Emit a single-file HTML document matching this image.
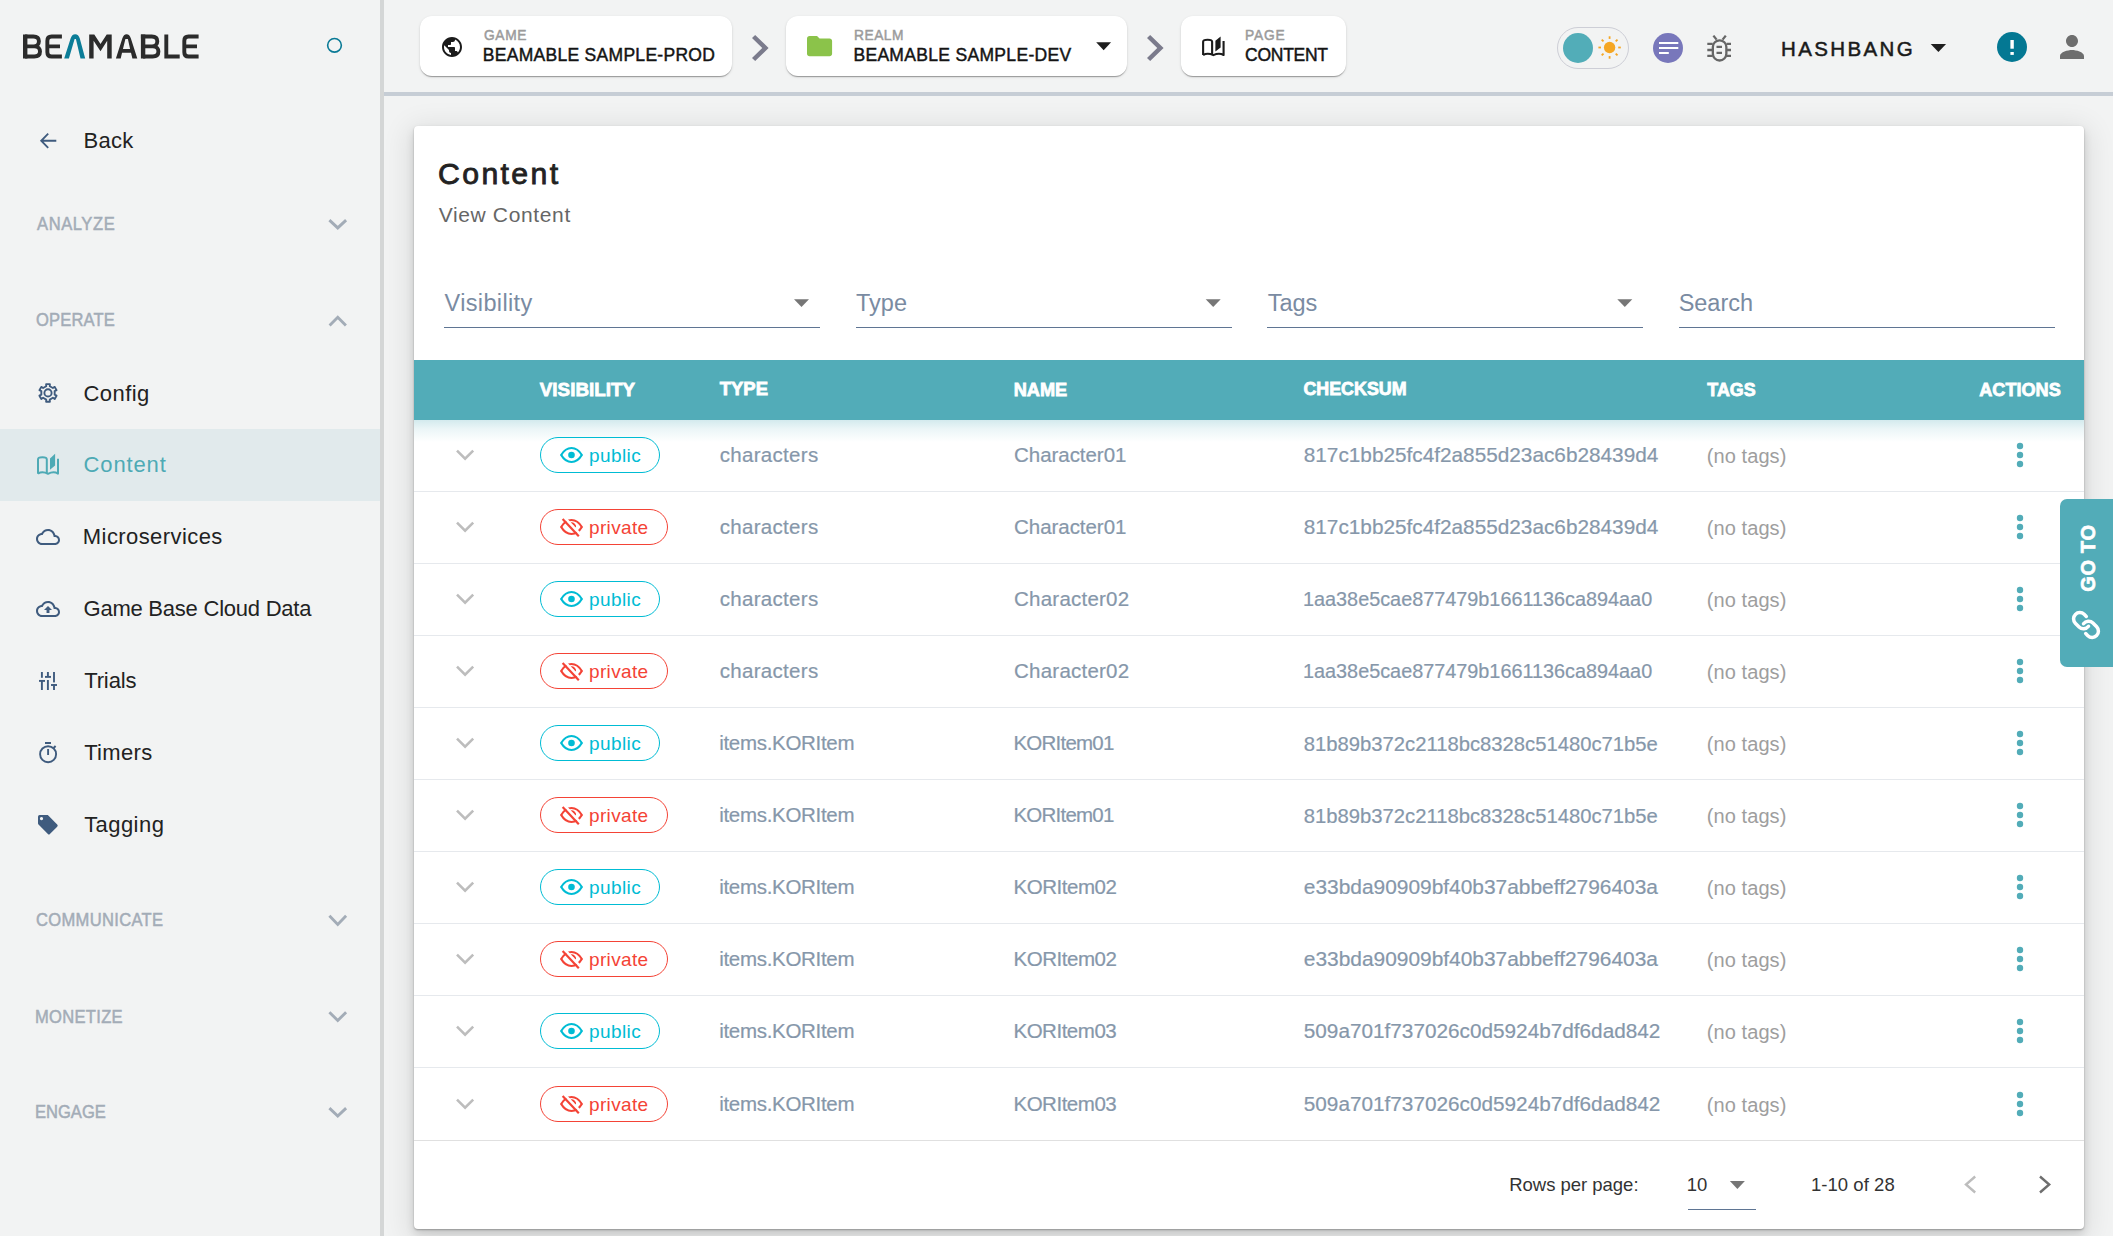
<!DOCTYPE html><html><head><meta charset="utf-8"><style>
html,body{margin:0;padding:0;}
body{width:2113px;height:1236px;overflow:hidden;position:relative;background:#f2f3f3;font-family:"Liberation Sans",sans-serif;}
.t{position:absolute;white-space:nowrap;line-height:1;}
.a{position:absolute;}
svg{position:absolute;overflow:visible;}
</style></head><body>
<div class="a" style="left:0;top:0;width:380px;height:1236px;background:#f2f3f3"></div>
<div class="a" style="left:380px;top:0;width:4px;height:1236px;background:#d4d6d6"></div>
<div class="a" style="left:0;top:429px;width:380px;height:72px;background:#e1eaec"></div>
<svg style="left:0;top:0" width="220" height="80" viewBox="0 0 220 80">
<g fill="none" stroke="#2b2b2b" stroke-width="3.9">
<path d="M25,36.45 H33.4 C37.4,36.45 38.9,38.6 38.9,41.2 C38.9,44.1 37.0,46.35 33.6,46.35 H25 M25,46.4 H34.4 C38.5,46.4 40.0,49.2 40.0,51.6 C40.0,54.6 38.2,56.55 34.2,56.55 H25"/>
<path d="M61.9,36.45 H51.6 C48.4,36.45 47.35,38.4 47.35,40.8 V52.2 C47.35,54.6 48.4,56.55 51.6,56.55 H61.9 M47.4,46.4 H60"/>
<path d="M140.9,36.45 H151.8 C155.8,36.45 157.3,38.6 157.3,41.2 C157.3,44.1 155.4,46.35 152,46.35 H143 M143,46.4 H152.8 C156.9,46.4 158.4,49.2 158.4,51.6 C158.4,54.6 156.6,56.55 152.6,56.55 H143"/>
<path d="M166.3,34.5 V56.55 H179.7"/>
<path d="M198.6,36.45 H188.5 C185.3,36.45 184.3,38.4 184.3,40.8 V52.2 C184.3,54.6 185.3,56.55 188.5,56.55 H198.6 M184.3,46.4 H197"/>
</g>
<g fill="#2b2b2b">
<rect x="23" y="34.5" width="4.4" height="24"/>
<rect x="140.9" y="34.5" width="4.4" height="24"/>
<path d="M89.2,58.5 V34.5 H94.3 L100.5,44 L106.7,34.5 H111.7 V58.5 H107.2 V40.8 L100.5,51.2 L93.6,40.8 V58.5 Z"/>
<path fill-rule="evenodd" d="M115.9,58.5 L122.3,38.6 Q123.6,34.3 126.6,34.3 Q129.6,34.3 130.9,38.6 L137.3,58.5 H132.4 L131.0,52.7 H122.05 L120.7,58.5 Z M122.95,49.1 H130.1 L127.9,38.9 H125.4 Z"/>
</g>
<path fill="#0b7d98" d="M64.2,58.5 L70.6,38.6 Q71.9,34.3 75.2,34.3 Q78.5,34.3 79.8,38.6 L85.2,58.5 H80.5 L75.9,38.9 H74.6 L68.9,58.5 Z"/>
<circle cx="334.5" cy="45.3" r="6.85" fill="none" stroke="#0a7a96" stroke-width="1.6"/>
</svg>
<svg style="left:0;top:0" width="80" height="200"><path d="M56.3,140.75 H41.5 M48.2,133.6 L41.2,140.75 L48.2,147.9" fill="none" stroke="#3f5b7e" stroke-width="1.8"/></svg>
<div class="t" style="left:83.44px;top:130.20px;font-size:22.00px;font-weight:400;color:#222;letter-spacing:0.27px;">Back</div>
<div class="t" style="left:36.50px;top:214.93px;font-size:18.20px;font-weight:400;color:#a3acb7;letter-spacing:0.65px;transform:scaleX(0.91);transform-origin:0 0;-webkit-text-stroke:0.5px #a3acb7">ANALYZE</div>
<svg style="left:0;top:0" width="1" height="1"><path d="M329.4,220.1 L337.75,227.9 L346.1,220.1" fill="none" stroke="#a3acb7" stroke-width="2.9"/></svg>
<div class="t" style="left:35.67px;top:311.23px;font-size:18.20px;font-weight:400;color:#a3acb7;letter-spacing:0.17px;transform:scaleX(0.91);transform-origin:0 0;-webkit-text-stroke:0.5px #a3acb7">OPERATE</div>
<svg style="left:0;top:0" width="1" height="1"><path d="M329.6,325.5 L337.75,317.3 L345.9,325.5" fill="none" stroke="#a3acb7" stroke-width="2.9"/></svg>
<div class="t" style="left:35.67px;top:911.43px;font-size:18.20px;font-weight:400;color:#a3acb7;letter-spacing:0.35px;transform:scaleX(0.91);transform-origin:0 0;-webkit-text-stroke:0.5px #a3acb7">COMMUNICATE</div>
<svg style="left:0;top:0" width="1" height="1"><path d="M329.4,915.8000000000001 L337.75,924.4 L346.1,915.8000000000001" fill="none" stroke="#a3acb7" stroke-width="2.9"/></svg>
<div class="t" style="left:35.18px;top:1007.53px;font-size:18.20px;font-weight:400;color:#a3acb7;letter-spacing:0.33px;transform:scaleX(0.91);transform-origin:0 0;-webkit-text-stroke:0.5px #a3acb7">MONETIZE</div>
<svg style="left:0;top:0" width="1" height="1"><path d="M329.4,1012.2 L337.75,1020.5 L346.1,1012.2" fill="none" stroke="#a3acb7" stroke-width="2.9"/></svg>
<div class="t" style="left:35.18px;top:1103.13px;font-size:18.20px;font-weight:400;color:#a3acb7;transform:scaleX(0.91);transform-origin:0 0;-webkit-text-stroke:0.5px #a3acb7">ENGAGE</div>
<svg style="left:0;top:0" width="1" height="1"><path d="M329.4,1108.1 L337.75,1116.1 L346.1,1108.1" fill="none" stroke="#a3acb7" stroke-width="2.9"/></svg>
<div class="t" style="left:83.50px;top:382.80px;font-size:22.00px;font-weight:400;color:#222;letter-spacing:0.43px;">Config</div>
<div class="t" style="left:83.50px;top:453.90px;font-size:22.00px;font-weight:400;color:#4eaab5;letter-spacing:0.88px;">Content</div>
<div class="t" style="left:82.84px;top:526.20px;font-size:22.00px;font-weight:400;color:#222;letter-spacing:0.42px;">Microservices</div>
<div class="t" style="left:83.50px;top:597.90px;font-size:22.00px;font-weight:400;color:#222;letter-spacing:-0.23px;">Game Base Cloud Data</div>
<div class="t" style="left:84.16px;top:670.10px;font-size:22.00px;font-weight:400;color:#222;letter-spacing:-0.12px;">Trials</div>
<div class="t" style="left:84.16px;top:742.10px;font-size:22.00px;font-weight:400;color:#222;letter-spacing:0.34px;">Timers</div>
<div class="t" style="left:84.16px;top:814.20px;font-size:22.00px;font-weight:400;color:#222;letter-spacing:0.44px;">Tagging</div>
<svg style="left:0;top:0" width="1" height="1"><path d="M46.21,386.24 L46.13,384.10 L49.87,384.10 L49.79,386.24 L52.88,388.02 L54.69,386.88 L56.56,390.12 L54.66,391.11 L54.66,394.69 L56.56,395.68 L54.69,398.92 L52.88,397.78 L49.79,399.56 L49.87,401.70 L46.13,401.70 L46.21,399.56 L43.12,397.78 L41.31,398.92 L39.44,395.68 L41.34,394.69 L41.34,391.11 L39.44,390.12 L41.31,386.88 L43.12,388.02Z" fill="none" stroke="#3f5b7e" stroke-width="1.9" stroke-linejoin="round"/><circle cx="48.0" cy="392.9" r="3.6" fill="none" stroke="#3f5b7e" stroke-width="1.9"/></svg>
<svg style="left:0;top:0" width="1" height="1"><g fill="none" stroke="#4eaab5" stroke-width="2.0" stroke-linejoin="round"><path d="M38.00,473.70 L38.00,459.40 C38.00,457.90 40.50,457.30 42.40,457.30 C44.30,457.30 46.80,457.90 46.80,459.40 L46.80,473.20"/><path d="M38.00,473.60 C40.70,472.00 44.50,472.00 48.00,473.80 C51.50,472.00 55.30,472.00 58.00,473.60 L58.00,458.70"/></g><path d="M50.00,458.40 L55.10,453.80 L55.10,465.60 L50.00,469.80 Z" fill="#4eaab5"/></svg>
<svg style="left:36px;top:524.8px" width="24" height="24" viewBox="0 0 24 24"><path d="M19.35 10.04C18.67 6.59 15.64 4 12 4 9.11 4 6.6 5.64 5.35 8.04 2.34 8.36 0 10.91 0 14c0 3.31 2.69 6 6 6h13c2.76 0 5-2.24 5-5 0-2.64-2.05-4.78-4.65-4.96zM19 18H6c-2.21 0-4-1.79-4-4 0-2.05 1.53-3.76 3.56-3.97l1.07-.11.5-.95C8.08 7.14 9.94 6 12 6c2.62 0 4.88 1.86 5.39 4.43l.3 1.5 1.53.11c1.56.1 2.78 1.41 2.78 2.96 0 1.65-1.35 3-3 3z" fill="#3f5b7e"/></svg>
<svg style="left:36px;top:596.8px" width="24" height="24" viewBox="0 0 24 24"><path d="M19.35 10.04C18.67 6.59 15.64 4 12 4 9.11 4 6.6 5.64 5.35 8.04 2.34 8.36 0 10.91 0 14c0 3.31 2.69 6 6 6h13c2.76 0 5-2.24 5-5 0-2.64-2.05-4.78-4.65-4.96zM19 18H6c-2.21 0-4-1.79-4-4 0-2.05 1.53-3.76 3.56-3.97l1.07-.11.5-.95C8.08 7.14 9.94 6 12 6c2.62 0 4.88 1.86 5.39 4.43l.3 1.5 1.53.11c1.56.1 2.78 1.41 2.78 2.96 0 1.65-1.35 3-3 3z" fill="#3f5b7e"/><path d="M8 13h2.55v3h2.9v-3H16l-4-4z" fill="#3f5b7e"/></svg>
<svg style="left:0;top:0" width="1" height="1"><g fill="#3f5b7e"><rect x="40.949999999999996" y="672" width="1.9" height="5.7999999999999545"/><rect x="40.949999999999996" y="680.2" width="1.9" height="9.799999999999955"/><rect x="39" y="679.9499999999999" width="6" height="1.9"/><rect x="46.949999999999996" y="672" width="1.9" height="5"/><rect x="46.949999999999996" y="680" width="1.9" height="10"/><rect x="45" y="675.9499999999999" width="6" height="1.9"/><rect x="53.05" y="672" width="1.9" height="10.399999999999977"/><rect x="53.05" y="684.2" width="1.9" height="5.7999999999999545"/><rect x="51" y="684.05" width="6" height="1.9"/></g></svg>
<svg style="left:0;top:0" width="1" height="1"><g fill="none" stroke="#3f5b7e" stroke-width="1.9"><circle cx="48.1" cy="754.2" r="8.0"/><path d="M45,743 H51 M48.1,749 V755 M53.6,748 L55.6,746"/></g></svg>
<svg style="left:0;top:0" width="1" height="1"><path d="M39.6,815.1 H47.8 L57.2,824.5 Q58.3,825.6 57.2,826.7 L49.9,834 Q48.9,835 47.9,834 L38.5,824.6 Q38,824.1 38,823.2 V816.7 Q38,815.1 39.6,815.1 Z M41.5,817 a1.6,1.6 0 1 0 0.01,0 Z" fill="#3f5b7e" fill-rule="evenodd"/></svg>
<div class="a" style="left:384px;top:92px;width:1729px;height:4px;background:#c6cdd5"></div>
<div class="a" style="left:420px;top:16px;width:312px;height:60px;background:#fff;border-radius:12px;box-shadow:0 2px 1px -1px rgba(0,0,0,.2),0 1px 1px 0 rgba(0,0,0,.14),0 1px 3px 0 rgba(0,0,0,.12);"></div>
<div class="a" style="left:786px;top:16px;width:341px;height:60px;background:#fff;border-radius:12px;box-shadow:0 2px 1px -1px rgba(0,0,0,.2),0 1px 1px 0 rgba(0,0,0,.14),0 1px 3px 0 rgba(0,0,0,.12);"></div>
<div class="a" style="left:1181px;top:16px;width:165px;height:60px;background:#fff;border-radius:12px;box-shadow:0 2px 1px -1px rgba(0,0,0,.2),0 1px 1px 0 rgba(0,0,0,.14),0 1px 3px 0 rgba(0,0,0,.12);"></div>
<svg style="left:440px;top:35px" width="24" height="24" viewBox="0 0 24 24"><path d="M12 2C6.48 2 2 6.48 2 12s4.48 10 10 10 10-4.48 10-10S17.52 2 12 2zm-1 17.93c-3.95-.49-7-3.85-7-7.93 0-.62.08-1.21.21-1.79L9 15v1c0 1.1.9 2 2 2v1.93zm6.9-2.54c-.26-.81-1-1.39-1.9-1.39h-1v-3c0-.55-.45-1-1-1H8v-2h2c.55 0 1-.45 1-1V7h2c1.1 0 2-.9 2-2v-.41c2.93 1.19 5 4.06 5 7.41 0 2.08-.8 3.97-2.1 5.39z" fill="#1b1b1b"/></svg>
<div class="t" style="left:483.51px;top:26.50px;font-size:15.30px;font-weight:400;color:#9b9b9b;letter-spacing:0.72px;transform:scaleX(0.9);transform-origin:0 0;-webkit-text-stroke:0.5px #9b9b9b">GAME</div>
<div class="t" style="left:482.80px;top:46.62px;font-size:17.50px;font-weight:400;color:#141414;letter-spacing:0.29px;-webkit-text-stroke:0.45px #141414">BEAMABLE SAMPLE-PROD</div>
<svg style="left:751.6px;top:34.8px" width="16.6" height="26" viewBox="8.59 6 7.41 12" preserveAspectRatio="none"><path d="M10 6L8.59 7.41 13.17 12l-4.58 4.59L10 18l6-6z" fill="#7b7b8c"/></svg>
<svg style="left:1146.9px;top:34.8px" width="16.6" height="26" viewBox="8.59 6 7.41 12" preserveAspectRatio="none"><path d="M10 6L8.59 7.41 13.17 12l-4.58 4.59L10 18l6-6z" fill="#7b7b8c"/></svg>
<svg style="left:806.5px;top:35.8px" width="25.1" height="20.3" viewBox="2 4 20 16" preserveAspectRatio="none"><path d="M10 4H4c-1.1 0-1.99.9-1.99 2L2 18c0 1.1.9 2 2 2h16c1.1 0 2-.9 2-2V8c0-1.1-.9-2-2-2h-8l-2-2z" fill="#8bc34a"/></svg>
<div class="t" style="left:853.70px;top:26.50px;font-size:15.30px;font-weight:400;color:#9b9b9b;letter-spacing:0.57px;transform:scaleX(0.9);transform-origin:0 0;-webkit-text-stroke:0.5px #9b9b9b">REALM</div>
<div class="t" style="left:853.40px;top:46.62px;font-size:17.50px;font-weight:400;color:#141414;letter-spacing:0.32px;-webkit-text-stroke:0.45px #141414">BEAMABLE SAMPLE-DEV</div>
<svg style="left:0;top:0" width="1" height="1"><path d="M1096.2,42.2 H1111.1 L1103.65,50.2 Z" fill="#1e1e1e"/></svg>
<svg style="left:0;top:0" width="1" height="1"><g fill="none" stroke="#1b1b1b" stroke-width="2.1" stroke-linejoin="round"><path d="M1203.12,55.05 L1203.12,41.72 C1203.12,40.32 1205.68,39.76 1207.62,39.76 C1209.57,39.76 1212.12,40.32 1212.12,41.72 L1212.12,54.59"/><path d="M1203.12,54.96 C1205.89,53.47 1209.77,53.47 1213.35,55.15 C1216.93,53.47 1220.81,53.47 1223.58,54.96 L1223.58,41.07"/></g><path d="M1215.40,40.79 L1220.61,36.50 L1220.61,47.50 L1215.40,51.42 Z" fill="#1b1b1b"/></svg>
<div class="t" style="left:1244.90px;top:26.50px;font-size:15.30px;font-weight:400;color:#9b9b9b;letter-spacing:0.92px;transform:scaleX(0.9);transform-origin:0 0;-webkit-text-stroke:0.5px #9b9b9b">PAGE</div>
<div class="t" style="left:1245.12px;top:46.62px;font-size:17.50px;font-weight:400;color:#141414;letter-spacing:-0.28px;-webkit-text-stroke:0.45px #141414">CONTENT</div>
<div class="a" style="left:1557px;top:27px;width:70px;height:40px;border:1px solid #cdced6;border-radius:21px;"></div>
<div class="a" style="left:1563px;top:33px;width:30px;height:30px;border-radius:50%;background:#52adb8"></div>
<svg style="left:0;top:0" width="1" height="1"><circle cx="1609.6" cy="47.5" r="5.7" fill="#f5a623"/><g stroke="#f5a623" stroke-width="1.8"><line x1="1618.20" y1="47.50" x2="1620.80" y2="47.50"/><line x1="1615.68" y1="53.58" x2="1617.52" y2="55.42"/><line x1="1609.60" y1="56.10" x2="1609.60" y2="58.70"/><line x1="1603.52" y1="53.58" x2="1601.68" y2="55.42"/><line x1="1601.00" y1="47.50" x2="1598.40" y2="47.50"/><line x1="1603.52" y1="41.42" x2="1601.68" y2="39.58"/><line x1="1609.60" y1="38.90" x2="1609.60" y2="36.30"/><line x1="1615.68" y1="41.42" x2="1617.52" y2="39.58"/></g></svg>
<div class="a" style="left:1653px;top:33px;width:30px;height:30px;border-radius:50%;background:#7877bb"></div>
<svg style="left:0;top:0" width="1" height="1"><g fill="#fff"><rect x="1659" y="42" width="19.3" height="2"/><rect x="1659" y="47" width="19.3" height="2"/><rect x="1659" y="52" width="9.8" height="2"/></g></svg>
<svg style="left:0;top:0" width="1" height="1"><g fill="none" stroke="#666" stroke-width="2.3"><rect x="1712.85" y="40.3" width="13.5" height="20.2" rx="6.75"/><path d="M1707.3,43.9 H1712.7 M1707.3,50 H1712.7 M1707.3,55.8 H1712.7 M1726.5,43.9 H1731 M1726.5,50 H1731 M1726.5,55.8 H1731 M1716.5,46.9 H1722 M1716.5,52.9 H1722 M1713.4,35.6 L1716.6,39.6 M1725.8,35.6 L1722.6,39.6"/></g></svg>
<div class="t" style="left:1781.06px;top:39.08px;font-size:20.50px;font-weight:400;color:#1a1a1a;letter-spacing:2.37px;-webkit-text-stroke:0.5px #1a1a1a">HASHBANG</div>
<svg style="left:0;top:0" width="1" height="1"><path d="M1930.7,44 H1946.1 L1938.4,52.1 Z" fill="#1e1e1e"/></svg>
<div class="a" style="left:1997.1px;top:32.4px;width:30px;height:30px;border-radius:50%;background:#047893"></div>
<svg style="left:0;top:0" width="1" height="1"><g fill="#fff"><rect x="2010.4" y="40" width="3.4" height="8.7"/><rect x="2010.4" y="52" width="3.4" height="2.9"/></g></svg>
<svg style="left:2053.8px;top:29.4px" width="36" height="36" viewBox="0 0 24 24"><path d="M12 12c2.21 0 4-1.79 4-4s-1.79-4-4-4-4 1.79-4 4 1.79 4 4 4zm0 2c-2.67 0-8 1.34-8 4v2h16v-2c0-2.66-5.33-4-8-4z" fill="#6e6e6e"/></svg>
<div class="a" style="left:414px;top:126px;width:1670px;height:1103px;background:#fff;border-radius:4px;box-shadow:0 1px 2px rgba(0,0,0,.28),0 5px 10px rgba(0,0,0,.12),0 6px 28px 6px rgba(0,0,0,.09);"></div>
<div class="t" style="left:438.09px;top:158.63px;font-size:30.20px;font-weight:400;color:#222;letter-spacing:2.37px;-webkit-text-stroke:0.85px #222">Content</div>
<div class="t" style="left:438.69px;top:204.15px;font-size:21.00px;font-weight:400;color:#666;letter-spacing:0.64px;">View Content</div>
<div class="a" style="left:444.0px;top:327px;width:376px;height:1.4px;background:#5f7593"></div>
<div class="t" style="left:444.56px;top:291.52px;font-size:23.50px;font-weight:400;color:#7a8ba2;letter-spacing:0.36px;">Visibility</div>
<svg style="left:0;top:0" width="1" height="1"><path d="M794.0,299.2 H809.0 L801.5,307 Z" fill="#767676"/></svg>
<div class="a" style="left:855.7px;top:327px;width:376px;height:1.4px;background:#5f7593"></div>
<div class="t" style="left:856.00px;top:291.52px;font-size:23.50px;font-weight:400;color:#7a8ba2;">Type</div>
<svg style="left:0;top:0" width="1" height="1"><path d="M1205.7,299.2 H1220.7 L1213.2,307 Z" fill="#767676"/></svg>
<div class="a" style="left:1267.3px;top:327px;width:376px;height:1.4px;background:#5f7593"></div>
<div class="t" style="left:1267.67px;top:291.52px;font-size:23.50px;font-weight:400;color:#7a8ba2;">Tags</div>
<svg style="left:0;top:0" width="1" height="1"><path d="M1617.3,299.2 H1632.3 L1624.8,307 Z" fill="#767676"/></svg>
<div class="a" style="left:1679.0px;top:327px;width:376px;height:1.4px;background:#5f7593"></div>
<div class="t" style="left:1678.63px;top:291.52px;font-size:23.50px;font-weight:400;color:#7a8ba2;">Search</div>
<div class="a" style="left:414px;top:360px;width:1670px;height:60px;background:#52acb8"></div>
<div class="a" style="left:414px;top:420px;width:1670px;height:22px;background:linear-gradient(rgba(72,168,182,.24),rgba(72,168,182,.11) 40%,rgba(72,168,182,0))"></div>
<div class="t" style="left:539.81px;top:381.10px;font-size:18.83px;font-weight:700;color:#fff;-webkit-text-stroke:0.8px #fff">VISIBILITY</div>
<div class="t" style="left:719.72px;top:380.19px;font-size:18.48px;font-weight:700;color:#fff;-webkit-text-stroke:0.8px #fff">TYPE</div>
<div class="t" style="left:1013.63px;top:380.63px;font-size:18.20px;font-weight:700;color:#fff;-webkit-text-stroke:0.8px #fff">NAME</div>
<div class="t" style="left:1303.38px;top:380.90px;font-size:17.88px;font-weight:700;color:#fff;-webkit-text-stroke:0.8px #fff">CHECKSUM</div>
<div class="t" style="left:1707.32px;top:381.62px;font-size:17.86px;font-weight:700;color:#fff;-webkit-text-stroke:0.8px #fff">TAGS</div>
<div class="t" style="left:1979.26px;top:381.39px;font-size:18.13px;font-weight:700;color:#fff;-webkit-text-stroke:0.8px #fff">ACTIONS</div>
<div class="a" style="left:414px;top:491px;width:1670px;height:1px;background:#e6e9ed"></div>
<svg style="left:0;top:0" width="1" height="1"><path d="M457,450.6 L465.1,458.6 L473.2,450.6" fill="none" stroke="#bdbdbd" stroke-width="2.6"/></svg>
<div class="a" style="left:540px;top:437px;width:118px;height:34px;border:1px solid #00bcd4;border-radius:18px;"></div>
<svg style="left:0;top:0" width="1" height="1"><path d="M561.2,455 C564.5,449.4 568,448.0 571.5,448.0 C575,448.0 578.5,449.4 581.8,455 C578.5,460.6 575,462.0 571.5,462.0 C568,462.0 564.5,460.6 561.2,455 Z" fill="none" stroke="#00bcd4" stroke-width="2.2"/><circle cx="571.5" cy="455" r="3.3" fill="#00bcd4"/></svg>
<div class="t" style="left:589.06px;top:445.65px;font-size:19.00px;font-weight:400;color:#00bcd4;letter-spacing:0.39px;">public</div>
<div class="t" style="left:719.78px;top:445.48px;font-size:20.50px;font-weight:400;color:#8697aa;letter-spacing:0.30px;-webkit-text-stroke:0.2px #8697aa">characters</div>
<div class="t" style="left:1014.08px;top:445.48px;font-size:20.50px;font-weight:400;color:#8697aa;letter-spacing:-0.05px;-webkit-text-stroke:0.2px #8697aa">Character01</div>
<div class="t" style="left:1303.77px;top:445.24px;font-size:20.78px;font-weight:400;color:#8697aa;-webkit-text-stroke:0.2px #8697aa">817c1bb25fc4f2a855d23ac6b28439d4</div>
<div class="t" style="left:1706.80px;top:445.90px;font-size:20.00px;font-weight:400;color:#9e9e9e;letter-spacing:0.08px;">(no tags)</div>
<svg style="left:0;top:0" width="1" height="1"><g fill="#52acb8"><circle cx="2020" cy="446" r="3.2"/><circle cx="2020" cy="455" r="3.2"/><circle cx="2020" cy="464" r="3.2"/></g></svg>
<div class="a" style="left:414px;top:563px;width:1670px;height:1px;background:#e6e9ed"></div>
<svg style="left:0;top:0" width="1" height="1"><path d="M457,522.6 L465.1,530.6 L473.2,522.6" fill="none" stroke="#bdbdbd" stroke-width="2.6"/></svg>
<div class="a" style="left:540px;top:509px;width:126px;height:34px;border:1px solid #f44336;border-radius:18px;"></div>
<svg style="left:0;top:0" width="1" height="1"><path d="M561.2,527 C564.5,521.4 568,520.0 571.5,520.0 C575,520.0 578.5,521.4 581.8,527 C578.5,532.6 575,534.0 571.5,534.0 C568,534.0 564.5,532.6 561.2,527 Z" fill="none" stroke="#f44336" stroke-width="2.2"/><path d="M570.6,523.5 A3.5,3.5 0 0 1 575.0,527.4" fill="none" stroke="#f44336" stroke-width="2.2"/><path d="M564.3,517.4 L580.6,534.7" stroke="#fff" stroke-width="2.6"/><path d="M562.6,519.0 L578.8,536.3" stroke="#f44336" stroke-width="2.2"/></svg>
<div class="t" style="left:589.06px;top:517.65px;font-size:19.00px;font-weight:400;color:#f44336;letter-spacing:0.33px;">private</div>
<div class="t" style="left:719.78px;top:517.48px;font-size:20.50px;font-weight:400;color:#8697aa;letter-spacing:0.30px;-webkit-text-stroke:0.2px #8697aa">characters</div>
<div class="t" style="left:1014.08px;top:517.48px;font-size:20.50px;font-weight:400;color:#8697aa;letter-spacing:-0.05px;-webkit-text-stroke:0.2px #8697aa">Character01</div>
<div class="t" style="left:1303.77px;top:517.24px;font-size:20.78px;font-weight:400;color:#8697aa;-webkit-text-stroke:0.2px #8697aa">817c1bb25fc4f2a855d23ac6b28439d4</div>
<div class="t" style="left:1706.80px;top:517.90px;font-size:20.00px;font-weight:400;color:#9e9e9e;letter-spacing:0.08px;">(no tags)</div>
<svg style="left:0;top:0" width="1" height="1"><g fill="#52acb8"><circle cx="2020" cy="518" r="3.2"/><circle cx="2020" cy="527" r="3.2"/><circle cx="2020" cy="536" r="3.2"/></g></svg>
<div class="a" style="left:414px;top:635px;width:1670px;height:1px;background:#e6e9ed"></div>
<svg style="left:0;top:0" width="1" height="1"><path d="M457,594.6 L465.1,602.6 L473.2,594.6" fill="none" stroke="#bdbdbd" stroke-width="2.6"/></svg>
<div class="a" style="left:540px;top:581px;width:118px;height:34px;border:1px solid #00bcd4;border-radius:18px;"></div>
<svg style="left:0;top:0" width="1" height="1"><path d="M561.2,599 C564.5,593.4 568,592.0 571.5,592.0 C575,592.0 578.5,593.4 581.8,599 C578.5,604.6 575,606.0 571.5,606.0 C568,606.0 564.5,604.6 561.2,599 Z" fill="none" stroke="#00bcd4" stroke-width="2.2"/><circle cx="571.5" cy="599" r="3.3" fill="#00bcd4"/></svg>
<div class="t" style="left:589.06px;top:589.65px;font-size:19.00px;font-weight:400;color:#00bcd4;letter-spacing:0.39px;">public</div>
<div class="t" style="left:719.78px;top:589.48px;font-size:20.50px;font-weight:400;color:#8697aa;letter-spacing:0.30px;-webkit-text-stroke:0.2px #8697aa">characters</div>
<div class="t" style="left:1014.08px;top:589.48px;font-size:20.50px;font-weight:400;color:#8697aa;letter-spacing:0.22px;-webkit-text-stroke:0.2px #8697aa">Character02</div>
<div class="t" style="left:1303.01px;top:590.04px;font-size:19.84px;font-weight:400;color:#8697aa;-webkit-text-stroke:0.2px #8697aa">1aa38e5cae877479b1661136ca894aa0</div>
<div class="t" style="left:1706.80px;top:589.90px;font-size:20.00px;font-weight:400;color:#9e9e9e;letter-spacing:0.08px;">(no tags)</div>
<svg style="left:0;top:0" width="1" height="1"><g fill="#52acb8"><circle cx="2020" cy="590" r="3.2"/><circle cx="2020" cy="599" r="3.2"/><circle cx="2020" cy="608" r="3.2"/></g></svg>
<div class="a" style="left:414px;top:707px;width:1670px;height:1px;background:#e6e9ed"></div>
<svg style="left:0;top:0" width="1" height="1"><path d="M457,666.6 L465.1,674.6 L473.2,666.6" fill="none" stroke="#bdbdbd" stroke-width="2.6"/></svg>
<div class="a" style="left:540px;top:653px;width:126px;height:34px;border:1px solid #f44336;border-radius:18px;"></div>
<svg style="left:0;top:0" width="1" height="1"><path d="M561.2,671 C564.5,665.4 568,664.0 571.5,664.0 C575,664.0 578.5,665.4 581.8,671 C578.5,676.6 575,678.0 571.5,678.0 C568,678.0 564.5,676.6 561.2,671 Z" fill="none" stroke="#f44336" stroke-width="2.2"/><path d="M570.6,667.5 A3.5,3.5 0 0 1 575.0,671.4" fill="none" stroke="#f44336" stroke-width="2.2"/><path d="M564.3,661.4 L580.6,678.7" stroke="#fff" stroke-width="2.6"/><path d="M562.6,663.0 L578.8,680.3" stroke="#f44336" stroke-width="2.2"/></svg>
<div class="t" style="left:589.06px;top:661.65px;font-size:19.00px;font-weight:400;color:#f44336;letter-spacing:0.33px;">private</div>
<div class="t" style="left:719.78px;top:661.48px;font-size:20.50px;font-weight:400;color:#8697aa;letter-spacing:0.30px;-webkit-text-stroke:0.2px #8697aa">characters</div>
<div class="t" style="left:1014.08px;top:661.48px;font-size:20.50px;font-weight:400;color:#8697aa;letter-spacing:0.22px;-webkit-text-stroke:0.2px #8697aa">Character02</div>
<div class="t" style="left:1303.01px;top:662.04px;font-size:19.84px;font-weight:400;color:#8697aa;-webkit-text-stroke:0.2px #8697aa">1aa38e5cae877479b1661136ca894aa0</div>
<div class="t" style="left:1706.80px;top:661.90px;font-size:20.00px;font-weight:400;color:#9e9e9e;letter-spacing:0.08px;">(no tags)</div>
<svg style="left:0;top:0" width="1" height="1"><g fill="#52acb8"><circle cx="2020" cy="662" r="3.2"/><circle cx="2020" cy="671" r="3.2"/><circle cx="2020" cy="680" r="3.2"/></g></svg>
<div class="a" style="left:414px;top:779px;width:1670px;height:1px;background:#e6e9ed"></div>
<svg style="left:0;top:0" width="1" height="1"><path d="M457,738.6 L465.1,746.6 L473.2,738.6" fill="none" stroke="#bdbdbd" stroke-width="2.6"/></svg>
<div class="a" style="left:540px;top:725px;width:118px;height:34px;border:1px solid #00bcd4;border-radius:18px;"></div>
<svg style="left:0;top:0" width="1" height="1"><path d="M561.2,743 C564.5,737.4 568,736.0 571.5,736.0 C575,736.0 578.5,737.4 581.8,743 C578.5,748.6 575,750.0 571.5,750.0 C568,750.0 564.5,748.6 561.2,743 Z" fill="none" stroke="#00bcd4" stroke-width="2.2"/><circle cx="571.5" cy="743" r="3.3" fill="#00bcd4"/></svg>
<div class="t" style="left:589.06px;top:733.65px;font-size:19.00px;font-weight:400;color:#00bcd4;letter-spacing:0.39px;">public</div>
<div class="t" style="left:719.17px;top:733.48px;font-size:20.50px;font-weight:400;color:#8697aa;letter-spacing:-0.30px;-webkit-text-stroke:0.2px #8697aa">items.KORItem</div>
<div class="t" style="left:1013.46px;top:733.48px;font-size:20.50px;font-weight:400;color:#8697aa;letter-spacing:-0.77px;-webkit-text-stroke:0.2px #8697aa">KORItem01</div>
<div class="t" style="left:1303.79px;top:733.69px;font-size:20.24px;font-weight:400;color:#8697aa;-webkit-text-stroke:0.2px #8697aa">81b89b372c2118bc8328c51480c71b5e</div>
<div class="t" style="left:1706.80px;top:733.90px;font-size:20.00px;font-weight:400;color:#9e9e9e;letter-spacing:0.08px;">(no tags)</div>
<svg style="left:0;top:0" width="1" height="1"><g fill="#52acb8"><circle cx="2020" cy="734" r="3.2"/><circle cx="2020" cy="743" r="3.2"/><circle cx="2020" cy="752" r="3.2"/></g></svg>
<div class="a" style="left:414px;top:851px;width:1670px;height:1px;background:#e6e9ed"></div>
<svg style="left:0;top:0" width="1" height="1"><path d="M457,810.6 L465.1,818.6 L473.2,810.6" fill="none" stroke="#bdbdbd" stroke-width="2.6"/></svg>
<div class="a" style="left:540px;top:797px;width:126px;height:34px;border:1px solid #f44336;border-radius:18px;"></div>
<svg style="left:0;top:0" width="1" height="1"><path d="M561.2,815 C564.5,809.4 568,808.0 571.5,808.0 C575,808.0 578.5,809.4 581.8,815 C578.5,820.6 575,822.0 571.5,822.0 C568,822.0 564.5,820.6 561.2,815 Z" fill="none" stroke="#f44336" stroke-width="2.2"/><path d="M570.6,811.5 A3.5,3.5 0 0 1 575.0,815.4" fill="none" stroke="#f44336" stroke-width="2.2"/><path d="M564.3,805.4 L580.6,822.7" stroke="#fff" stroke-width="2.6"/><path d="M562.6,807.0 L578.8,824.3" stroke="#f44336" stroke-width="2.2"/></svg>
<div class="t" style="left:589.06px;top:805.65px;font-size:19.00px;font-weight:400;color:#f44336;letter-spacing:0.33px;">private</div>
<div class="t" style="left:719.17px;top:805.48px;font-size:20.50px;font-weight:400;color:#8697aa;letter-spacing:-0.30px;-webkit-text-stroke:0.2px #8697aa">items.KORItem</div>
<div class="t" style="left:1013.46px;top:805.48px;font-size:20.50px;font-weight:400;color:#8697aa;letter-spacing:-0.77px;-webkit-text-stroke:0.2px #8697aa">KORItem01</div>
<div class="t" style="left:1303.79px;top:805.69px;font-size:20.24px;font-weight:400;color:#8697aa;-webkit-text-stroke:0.2px #8697aa">81b89b372c2118bc8328c51480c71b5e</div>
<div class="t" style="left:1706.80px;top:805.90px;font-size:20.00px;font-weight:400;color:#9e9e9e;letter-spacing:0.08px;">(no tags)</div>
<svg style="left:0;top:0" width="1" height="1"><g fill="#52acb8"><circle cx="2020" cy="806" r="3.2"/><circle cx="2020" cy="815" r="3.2"/><circle cx="2020" cy="824" r="3.2"/></g></svg>
<div class="a" style="left:414px;top:923px;width:1670px;height:1px;background:#e6e9ed"></div>
<svg style="left:0;top:0" width="1" height="1"><path d="M457,882.6 L465.1,890.6 L473.2,882.6" fill="none" stroke="#bdbdbd" stroke-width="2.6"/></svg>
<div class="a" style="left:540px;top:869px;width:118px;height:34px;border:1px solid #00bcd4;border-radius:18px;"></div>
<svg style="left:0;top:0" width="1" height="1"><path d="M561.2,887 C564.5,881.4 568,880.0 571.5,880.0 C575,880.0 578.5,881.4 581.8,887 C578.5,892.6 575,894.0 571.5,894.0 C568,894.0 564.5,892.6 561.2,887 Z" fill="none" stroke="#00bcd4" stroke-width="2.2"/><circle cx="571.5" cy="887" r="3.3" fill="#00bcd4"/></svg>
<div class="t" style="left:589.06px;top:877.65px;font-size:19.00px;font-weight:400;color:#00bcd4;letter-spacing:0.39px;">public</div>
<div class="t" style="left:719.17px;top:877.48px;font-size:20.50px;font-weight:400;color:#8697aa;letter-spacing:-0.30px;-webkit-text-stroke:0.2px #8697aa">items.KORItem</div>
<div class="t" style="left:1013.46px;top:877.48px;font-size:20.50px;font-weight:400;color:#8697aa;letter-spacing:-0.46px;-webkit-text-stroke:0.2px #8697aa">KORItem02</div>
<div class="t" style="left:1303.76px;top:877.13px;font-size:20.91px;font-weight:400;color:#8697aa;-webkit-text-stroke:0.2px #8697aa">e33bda90909bf40b37abbeff2796403a</div>
<div class="t" style="left:1706.80px;top:877.90px;font-size:20.00px;font-weight:400;color:#9e9e9e;letter-spacing:0.08px;">(no tags)</div>
<svg style="left:0;top:0" width="1" height="1"><g fill="#52acb8"><circle cx="2020" cy="878" r="3.2"/><circle cx="2020" cy="887" r="3.2"/><circle cx="2020" cy="896" r="3.2"/></g></svg>
<div class="a" style="left:414px;top:995px;width:1670px;height:1px;background:#e6e9ed"></div>
<svg style="left:0;top:0" width="1" height="1"><path d="M457,954.6 L465.1,962.6 L473.2,954.6" fill="none" stroke="#bdbdbd" stroke-width="2.6"/></svg>
<div class="a" style="left:540px;top:941px;width:126px;height:34px;border:1px solid #f44336;border-radius:18px;"></div>
<svg style="left:0;top:0" width="1" height="1"><path d="M561.2,959 C564.5,953.4 568,952.0 571.5,952.0 C575,952.0 578.5,953.4 581.8,959 C578.5,964.6 575,966.0 571.5,966.0 C568,966.0 564.5,964.6 561.2,959 Z" fill="none" stroke="#f44336" stroke-width="2.2"/><path d="M570.6,955.5 A3.5,3.5 0 0 1 575.0,959.4" fill="none" stroke="#f44336" stroke-width="2.2"/><path d="M564.3,949.4 L580.6,966.7" stroke="#fff" stroke-width="2.6"/><path d="M562.6,951.0 L578.8,968.3" stroke="#f44336" stroke-width="2.2"/></svg>
<div class="t" style="left:589.06px;top:949.65px;font-size:19.00px;font-weight:400;color:#f44336;letter-spacing:0.33px;">private</div>
<div class="t" style="left:719.17px;top:949.48px;font-size:20.50px;font-weight:400;color:#8697aa;letter-spacing:-0.30px;-webkit-text-stroke:0.2px #8697aa">items.KORItem</div>
<div class="t" style="left:1013.46px;top:949.48px;font-size:20.50px;font-weight:400;color:#8697aa;letter-spacing:-0.46px;-webkit-text-stroke:0.2px #8697aa">KORItem02</div>
<div class="t" style="left:1303.76px;top:949.13px;font-size:20.91px;font-weight:400;color:#8697aa;-webkit-text-stroke:0.2px #8697aa">e33bda90909bf40b37abbeff2796403a</div>
<div class="t" style="left:1706.80px;top:949.90px;font-size:20.00px;font-weight:400;color:#9e9e9e;letter-spacing:0.08px;">(no tags)</div>
<svg style="left:0;top:0" width="1" height="1"><g fill="#52acb8"><circle cx="2020" cy="950" r="3.2"/><circle cx="2020" cy="959" r="3.2"/><circle cx="2020" cy="968" r="3.2"/></g></svg>
<div class="a" style="left:414px;top:1067px;width:1670px;height:1px;background:#e6e9ed"></div>
<svg style="left:0;top:0" width="1" height="1"><path d="M457,1026.6 L465.1,1034.6 L473.2,1026.6" fill="none" stroke="#bdbdbd" stroke-width="2.6"/></svg>
<div class="a" style="left:540px;top:1013px;width:118px;height:34px;border:1px solid #00bcd4;border-radius:18px;"></div>
<svg style="left:0;top:0" width="1" height="1"><path d="M561.2,1031 C564.5,1025.4 568,1024.0 571.5,1024.0 C575,1024.0 578.5,1025.4 581.8,1031 C578.5,1036.6 575,1038.0 571.5,1038.0 C568,1038.0 564.5,1036.6 561.2,1031 Z" fill="none" stroke="#00bcd4" stroke-width="2.2"/><circle cx="571.5" cy="1031" r="3.3" fill="#00bcd4"/></svg>
<div class="t" style="left:589.06px;top:1021.65px;font-size:19.00px;font-weight:400;color:#00bcd4;letter-spacing:0.39px;">public</div>
<div class="t" style="left:719.17px;top:1021.47px;font-size:20.50px;font-weight:400;color:#8697aa;letter-spacing:-0.30px;-webkit-text-stroke:0.2px #8697aa">items.KORItem</div>
<div class="t" style="left:1013.46px;top:1021.47px;font-size:20.50px;font-weight:400;color:#8697aa;letter-spacing:-0.48px;-webkit-text-stroke:0.2px #8697aa">KORItem03</div>
<div class="t" style="left:1303.77px;top:1021.26px;font-size:20.75px;font-weight:400;color:#8697aa;-webkit-text-stroke:0.2px #8697aa">509a701f737026c0d5924b7df6dad842</div>
<div class="t" style="left:1706.80px;top:1021.90px;font-size:20.00px;font-weight:400;color:#9e9e9e;letter-spacing:0.08px;">(no tags)</div>
<svg style="left:0;top:0" width="1" height="1"><g fill="#52acb8"><circle cx="2020" cy="1022" r="3.2"/><circle cx="2020" cy="1031" r="3.2"/><circle cx="2020" cy="1040" r="3.2"/></g></svg>
<div class="a" style="left:414px;top:1140px;width:1670px;height:1px;background:#e0e0e0"></div>
<svg style="left:0;top:0" width="1" height="1"><path d="M457,1099.6 L465.1,1107.6 L473.2,1099.6" fill="none" stroke="#bdbdbd" stroke-width="2.6"/></svg>
<div class="a" style="left:540px;top:1086px;width:126px;height:34px;border:1px solid #f44336;border-radius:18px;"></div>
<svg style="left:0;top:0" width="1" height="1"><path d="M561.2,1104 C564.5,1098.4 568,1097.0 571.5,1097.0 C575,1097.0 578.5,1098.4 581.8,1104 C578.5,1109.6 575,1111.0 571.5,1111.0 C568,1111.0 564.5,1109.6 561.2,1104 Z" fill="none" stroke="#f44336" stroke-width="2.2"/><path d="M570.6,1100.5 A3.5,3.5 0 0 1 575.0,1104.4" fill="none" stroke="#f44336" stroke-width="2.2"/><path d="M564.3,1094.4 L580.6,1111.7" stroke="#fff" stroke-width="2.6"/><path d="M562.6,1096.0 L578.8,1113.3" stroke="#f44336" stroke-width="2.2"/></svg>
<div class="t" style="left:589.06px;top:1094.65px;font-size:19.00px;font-weight:400;color:#f44336;letter-spacing:0.33px;">private</div>
<div class="t" style="left:719.17px;top:1094.47px;font-size:20.50px;font-weight:400;color:#8697aa;letter-spacing:-0.30px;-webkit-text-stroke:0.2px #8697aa">items.KORItem</div>
<div class="t" style="left:1013.46px;top:1094.47px;font-size:20.50px;font-weight:400;color:#8697aa;letter-spacing:-0.48px;-webkit-text-stroke:0.2px #8697aa">KORItem03</div>
<div class="t" style="left:1303.77px;top:1094.26px;font-size:20.75px;font-weight:400;color:#8697aa;-webkit-text-stroke:0.2px #8697aa">509a701f737026c0d5924b7df6dad842</div>
<div class="t" style="left:1706.80px;top:1094.90px;font-size:20.00px;font-weight:400;color:#9e9e9e;letter-spacing:0.08px;">(no tags)</div>
<svg style="left:0;top:0" width="1" height="1"><g fill="#52acb8"><circle cx="2020" cy="1095" r="3.2"/><circle cx="2020" cy="1104" r="3.2"/><circle cx="2020" cy="1113" r="3.2"/></g></svg>
<div class="t" style="left:1509.22px;top:1176.08px;font-size:18.50px;font-weight:400;color:#333;letter-spacing:-0.02px;">Rows per page:</div>
<div class="t" style="left:1686.72px;top:1176.08px;font-size:18.50px;font-weight:400;color:#333;letter-spacing:0.08px;">10</div>
<svg style="left:0;top:0" width="1" height="1"><path d="M1729.9,1181 H1744.9 L1737.4,1189.1 Z" fill="#767676"/></svg>
<div class="a" style="left:1688px;top:1209px;width:68px;height:1.4px;background:#5f7593"></div>
<div class="t" style="left:1810.92px;top:1176.08px;font-size:18.50px;font-weight:400;color:#333;letter-spacing:0.05px;">1-10 of 28</div>
<svg style="left:0;top:0" width="1" height="1"><path d="M1975.2,1176.5 L1966,1184.5 L1975.2,1192.5" fill="none" stroke="#bdbdbd" stroke-width="2.4"/><path d="M2040,1176.5 L2049.2,1184.5 L2040,1192.5" fill="none" stroke="#6e6e6e" stroke-width="2.4"/></svg>
<div class="a" style="left:2060px;top:499px;width:60px;height:168px;background:#52acb8;border-radius:7px 0 0 7px"></div>
<div class="t" style="left:2087.6px;top:558.2px;font-size:20px;font-weight:700;color:#fff;letter-spacing:0.7px;transform:translate(-50%,-50%) rotate(-90deg);line-height:1;-webkit-text-stroke:0.7px #fff">GO TO</div>
<svg style="left:2071.45px;top:609.75px" width="30" height="30" viewBox="0 0 24 24"><g fill="none" stroke="#fff" stroke-width="2.8" stroke-linecap="round" stroke-linejoin="round" transform="translate(24,0) scale(-1,1)"><path d="M10 13a5 5 0 0 0 7.54.54l3-3a5 5 0 0 0-7.07-7.07l-1.72 1.71"/><path d="M14 11a5 5 0 0 0-7.54-.54l-3 3a5 5 0 0 0 7.07 7.07l1.71-1.71"/></g></svg>
</body></html>
